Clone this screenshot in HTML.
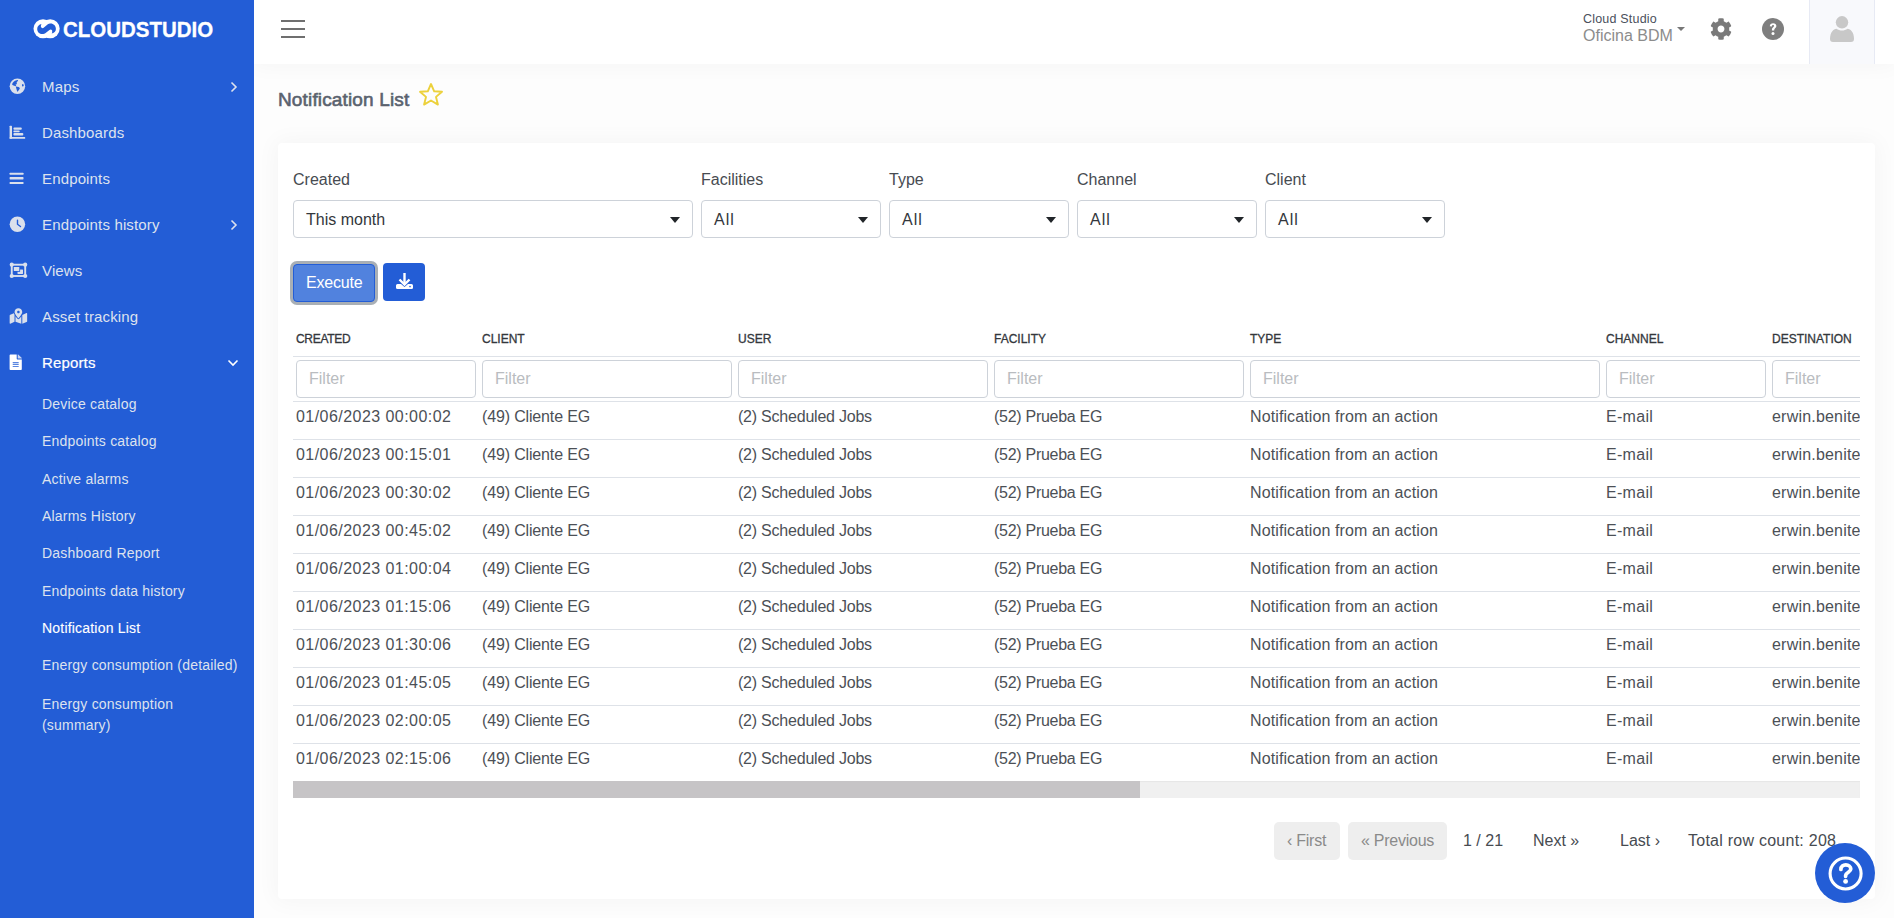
<!DOCTYPE html>
<html><head><meta charset="utf-8">
<style>
*{box-sizing:border-box;margin:0;padding:0}
html,body{width:1894px;height:918px;overflow:hidden}
body{white-space:nowrap;font-family:"Liberation Sans",sans-serif;background:#fdfdfd;position:relative;color:#333}
.a{position:absolute;white-space:nowrap}
#side{position:absolute;left:0;top:0;width:254px;height:918px;background:#235dd6;z-index:3}
#hdr{position:absolute;left:254px;top:0;width:1640px;height:64px;background:#fff;box-shadow:0 0 22px 2px rgba(0,0,0,0.035);z-index:2}
.nav{position:absolute;left:42px;font-size:15px;line-height:20px;color:#dde2ee;letter-spacing:0.15px}
.sub{position:absolute;left:42px;font-size:14px;line-height:18px;color:#dde2ee;letter-spacing:0.2px}
.ico{position:absolute;left:9px}
.chev{position:absolute;left:229.5px}
#card{position:absolute;left:278px;top:143px;width:1597px;height:756px;background:#fff;border-radius:4px;box-shadow:0 0 22px 3px rgba(0,0,0,0.035)}
.lbl{position:absolute;font-size:16px;line-height:20px;color:#474b51}
.sel{position:absolute;top:200px;height:38px;border:1px solid #cdd2d9;border-radius:4px;background:#fff}
.sel span{position:absolute;left:12px;top:9px;font-size:16px;line-height:20px;color:#33373c}
.sel i{position:absolute;right:12px;top:16px;width:0;height:0;border-left:5px solid transparent;border-right:5px solid transparent;border-top:6px solid #212529}
.th{position:absolute;top:331px;font-size:12px;line-height:16px;color:#33373c;-webkit-text-stroke:0.3px #33373c;letter-spacing:0}
.fi{position:absolute;top:360px;height:38px;border:1px solid #cdd2d9;border-radius:4px;background:#fff}
.fi span{position:absolute;left:12px;top:8px;font-size:16px;line-height:20px;color:#b9bcc0}
.hl{position:absolute;left:293px;width:1567px;height:1px;background:#dee2e8}
.rw{position:absolute;left:0;top:0;width:0;height:20px}
.row{position:absolute;top:0;font-size:16px;line-height:20px;color:#4c5056}
.pg{position:absolute;font-size:16px;line-height:20px;color:#474b51}
.pgb{position:absolute;top:822px;height:38px;background:#eeeeee;border-radius:5px}
.pgb span{position:absolute;top:9px;font-size:16px;line-height:20px;color:#8a8a8a;letter-spacing:-0.25px}
</style></head><body>

<div id="side">
  <!-- logo -->
  <svg class="a" style="left:28px;top:14px" width="38" height="30" viewBox="0 0 38 30">
    <circle cx="15" cy="14.8" r="9.5" fill="#fff"/><circle cx="22.2" cy="14.8" r="9.5" fill="#fff"/>
    <path d="M13.6 10.1 C11 10.5 9.2 12.5 9.2 14.9 C9.2 17.8 11.5 20.05 14.3 20.05 C15.8 20.05 16.6 19.8 17.6 19 L21.47 15.88 A1.7 1.7 0 0 1 24.19 17.64 C24.2 18.6 23.9 19.1 23.5 19.5 C26.1 19.1 27.9 17.2 27.9 14.9 C27.9 11.8 25.5 9.55 22.7 9.55 C21.5 9.55 20.6 9.8 19.5 10.6 L15.63 13.72 A1.7 1.7 0 0 1 12.91 11.96 C12.9 11 13.2 10.5 13.6 10.1 Z" fill="#235dd6"/>
  </svg>
  <div class="a" style="left:63px;top:15.5px;font-size:22.5px;line-height:27px;font-weight:bold;color:#fff;transform:scaleX(0.91);transform-origin:0 0;-webkit-text-stroke:0.3px #fff">CLOUDSTUDIO</div>

  <!-- nav icons -->
  <svg class="a" style="left:4px;top:74px" width="24" height="24" viewBox="0 0 24 24"><circle cx="13.4" cy="12.35" r="7.75" fill="#dae0ec"/><path d="M8.1 10.5 C8.2 9.4 8.9 8.4 11 6.8 C12 6.3 13 6.1 13.9 6.1 L14.1 6.8 L13.1 7.8 L12.5 8.9 L13.1 9.9 L11.6 10.6 L12.3 12.3 L11 12 L8.9 11.2 Z M11.8 12.5 L14.6 13.1 L15.9 13.9 L15.4 15.2 L13.6 17.8 L13.1 17.3 L12.3 14.6 Z" fill="#235dd6"/><ellipse cx="18.8" cy="11.3" rx="0.8" ry="1.3" fill="#235dd6"/></svg>
  <div class="nav" style="top:77px">Maps</div>
  <svg class="chev" style="top:81px" width="8" height="12" viewBox="0 0 8 12"><path d="M1.5 1.5 L6 6 L1.5 10.5" fill="none" stroke="#dde2ee" stroke-width="1.6"/></svg>

  <svg class="a" style="left:4px;top:120px" width="24" height="24" viewBox="0 0 24 24"><rect x="5.6" y="5.75" width="2.4" height="13.05" rx="0.6" fill="#dae0ec"/><rect x="5.6" y="17" width="15.6" height="1.8" rx="0.5" fill="#dae0ec"/><rect x="9.4" y="7.5" width="8.4" height="2.2" rx="1" fill="#dae0ec"/><rect x="9.4" y="10.6" width="6.3" height="1.7" rx="0.8" fill="#dae0ec"/><rect x="9.4" y="13" width="9.9" height="2.4" rx="1" fill="#dae0ec"/></svg>
  <div class="nav" style="top:123px">Dashboards</div>

  <svg class="a" style="left:4px;top:166px" width="24" height="24" viewBox="0 0 24 24"><rect x="5.6" y="6.7" width="13.9" height="2.1" rx="0.6" fill="#dae0ec"/><rect x="5.6" y="11.1" width="13.9" height="2.3" rx="0.6" fill="#dae0ec"/><rect x="5.6" y="16.1" width="13.9" height="1.9" rx="0.5" fill="#dae0ec"/></svg>
  <div class="nav" style="top:169px">Endpoints</div>

  <svg class="a" style="left:4px;top:212px" width="24" height="24" viewBox="0 0 24 24"><circle cx="13.4" cy="12.35" r="7.75" fill="#dae0ec"/><path d="M13.5 8.2 V12.3 L16.5 14.5" fill="none" stroke="#235dd6" stroke-width="1.4" stroke-linecap="round" stroke-linejoin="round"/></svg>
  <div class="nav" style="top:215px">Endpoints history</div>
  <svg class="chev" style="top:219px" width="8" height="12" viewBox="0 0 8 12"><path d="M1.5 1.5 L6 6 L1.5 10.5" fill="none" stroke="#dde2ee" stroke-width="1.6"/></svg>

  <svg class="a" style="left:4px;top:258px" width="24" height="24" viewBox="0 0 24 24"><rect x="7.75" y="6.7" width="13.45" height="11.3" fill="none" stroke="#dae0ec" stroke-width="1.9"/><circle cx="7.75" cy="6.7" r="2.1" fill="#dae0ec"/><circle cx="21.2" cy="6.7" r="2.1" fill="#dae0ec"/><circle cx="7.75" cy="18" r="2.1" fill="#dae0ec"/><circle cx="21.2" cy="18" r="2.1" fill="#dae0ec"/><rect x="13.5" y="11.5" width="5.5" height="4.4" rx="0.4" fill="#dae0ec"/><rect x="9.1" y="8.3" width="7" height="5.5" fill="#235dd6"/><rect x="9.8" y="9" width="5.5" height="4.1" rx="0.4" fill="#dae0ec"/></svg>
  <div class="nav" style="top:261px">Views</div>

  <svg class="a" style="left:4px;top:304px" width="24" height="24" viewBox="0 0 24 24"><path transform="translate(5.66 4.2) scale(0.03038)" fill="#dae0ec" d="M288 0c-69.59 0-126 56.41-126 126 0 56.26 82.35 158.8 113.9 196.02 6.39 7.540 17.82 7.540 24.2 0C331.65 284.8 414 182.26 414 126 414 56.41 357.59 0 288 0zm0 168c-23.2 0-42-18.8-42-42s18.8-42 42-42 42 18.8 42 42-18.8 42-42 42zM20.12 215.95A32.006 32.006 0 0 0 0 245.66v250.32c0 11.32 11.43 19.06 21.94 14.86L160 448V214.92c-8.84-15.98-16.07-31.54-21.25-46.42L20.12 215.95zM288 359.67c-14.07 0-27.38-6.18-36.51-16.96-19.66-23.2-40.57-49.62-59.49-76.72v182l192 64V266c-18.92 27.09-39.820 53.52-59.49 76.72-9.13 10.77-22.44 16.95-36.51 16.95zm266.06-198.51L416 224v288l139.88-55.950A31.996 31.996 0 0 0 576 426.34V176.02c0-11.32-11.43-19.06-21.94-14.86z"/></svg>
  <div class="nav" style="top:307px">Asset tracking</div>

  <svg class="a" style="left:4px;top:350px" width="24" height="24" viewBox="0 0 24 24"><g transform="translate(5.6 4.6) scale(0.03177 0.0301)"><path fill="#fff" d="M224 136V0H24C10.7 0 0 10.7 0 24v464c0 13.3 10.7 24 24 24h336c13.3 0 24-10.7 24-24V160H248c-13.2 0-24-10.8-24-24z"/><path fill="#c9d5f2" d="M384 121.9v6.1H256V0h6.1c6.4 0 12.5 2.5 17 7l97.9 98c4.5 4.5 7 10.6 7 16.9z"/><rect x="96" y="256" width="192" height="28" rx="10" fill="#235dd6"/><rect x="96" y="320" width="192" height="28" rx="10" fill="#235dd6"/><rect x="96" y="384" width="192" height="28" rx="10" fill="#235dd6"/></g></svg>
  <div class="nav" style="top:353px;color:#fff;-webkit-text-stroke:0.2px #fff">Reports</div>
  <svg class="a" style="left:227px;top:359px" width="12" height="8" viewBox="0 0 12 8"><path d="M1.5 1.5 L6 6 L10.5 1.5" fill="none" stroke="#fff" stroke-width="1.6"/></svg>

  <div class="sub" style="top:395px">Device catalog</div>
  <div class="sub" style="top:432px">Endpoints catalog</div>
  <div class="sub" style="top:470px">Active alarms</div>
  <div class="sub" style="top:507px">Alarms History</div>
  <div class="sub" style="top:544px">Dashboard Report</div>
  <div class="sub" style="top:582px">Endpoints data history</div>
  <div class="sub" style="top:619px;color:#fff;-webkit-text-stroke:0.12px #fff">Notification List</div>
  <div class="sub" style="top:656px">Energy consumption (detailed)</div>
  <div class="sub" style="top:694px;line-height:21px;white-space:normal">Energy consumption<br>(summary)</div>
</div>

<div id="hdr">
  <div class="a" style="left:27px;top:20px;width:24px;height:2px;background:#6f6f6f"></div>
  <div class="a" style="left:27px;top:28px;width:24px;height:2px;background:#6f6f6f"></div>
  <div class="a" style="left:27px;top:36px;width:24px;height:2px;background:#6f6f6f"></div>

  <div class="a" style="left:1329px;top:11px;font-size:12.5px;line-height:16px;color:#4a505c;letter-spacing:0.2px">Cloud Studio</div>
  <div class="a" style="left:1329px;top:27px;font-size:16px;line-height:18px;color:#8c8c8c">Oficina BDM</div>
  <div class="a" style="left:1423px;top:27px;width:0;height:0;border-left:4px solid transparent;border-right:4px solid transparent;border-top:4px solid #777"></div>

  <svg class="a" style="left:1456px;top:18px" width="22" height="22" viewBox="0 0 512 512"><path fill="#7a7a7a" d="M487.4 315.7l-42.6-24.6c4.3-23.2 4.3-47 0-70.2l42.6-24.6c4.9-2.8 7.1-8.6 5.5-14-11.1-35.6-30-67.8-54.7-94.6-3.8-4.100-10-5.1-14.800-2.300L380.800 110c-17.9-15.4-38.5-27.3-60.8-35.1V25.8c0-5.6-3.9-10.5-9.4-11.700-36.7-8.2-74.300-7.8-109.200 0-5.5 1.2-9.4 6.1-9.4 11.700V75c-22.2 7.9-42.8 19.8-60.8 35.100L88.700 85.500c-4.900-2.800-11-1.900-14.800 2.300-24.700 26.700-43.600 58.900-54.700 94.600-1.700 5.400.600 11.200 5.500 14L67.300 221c-4.300 23.200-4.300 47 0 70.200l-42.600 24.600c-4.900 2.800-7.100 8.600-5.500 14 11.100 35.600 30 67.800 54.700 94.600 3.800 4.100 10 5.100 14.800 2.300l42.600-24.600c17.900 15.400 38.500 27.300 60.800 35.100v49.200c0 5.600 3.900 10.500 9.400 11.700 36.700 8.200 74.300 7.800 109.200 0 5.500-1.200 9.400-6.100 9.400-11.700v-49.200c22.200-7.900 42.800-19.800 60.800-35.100l42.600 24.600c4.900 2.800 11 1.900 14.800-2.300 24.700-26.700 43.600-58.900 54.700-94.600 1.500-5.500-.700-11.300-5.600-14.100zM256 336c-44.100 0-80-35.900-80-80s35.900-80 80-80 80 35.900 80 80-35.900 80-80 80z"/></svg>

  <svg class="a" style="left:1508px;top:18px" width="22" height="22" viewBox="0 0 22 22"><circle cx="11" cy="11" r="11" fill="#7e7e7e"/><path d="M7.8 8.3 C7.8 6.2 9.3 5.2 11.1 5.2 C13 5.2 14.4 6.3 14.4 8 C14.4 9.9 12.2 10.3 12.2 12 V12.5 H9.9 V11.8 C9.9 9.6 12 9.2 12 8.1 C12 7.5 11.6 7.1 11 7.1 C10.4 7.1 10 7.6 10 8.4 Z" fill="#fff"/><circle cx="11" cy="15.4" r="1.5" fill="#fff"/></svg>

  <div class="a" style="left:1555px;top:0;width:66px;height:64px;background:#f8f9fc;border-left:1px solid #e7eaf4;border-right:1px solid #e7eaf4"></div>
  <svg class="a" style="left:1576px;top:16px" width="24" height="27" viewBox="0 0 24 27"><circle cx="12" cy="6.3" r="6.2" fill="#c8c8c8"/><path d="M0 23 C0 16.5 3.5 12.8 6.5 12.8 C8 14 10 14.6 12 14.6 C14 14.6 16 14 17.5 12.8 C20.5 12.8 24 16.5 24 23 C24 25 23 26 21 26 H3 C1 26 0 25 0 23 Z" fill="#c8c8c8"/></svg>
</div>

<div class="a" style="left:278px;top:89px;font-size:19px;line-height:22px;color:#5a626e;-webkit-text-stroke:0.6px #5a626e;letter-spacing:0.15px">Notification List</div>
<svg class="a" style="left:418px;top:82px" width="26" height="26" viewBox="0 0 26 26"><path d="M13 2 L16.2 9.3 L24 9.8 L18 14.9 L19.9 22.6 L13 18.5 L6.1 22.6 L8 14.9 L2 9.8 L9.8 9.3 Z" fill="none" stroke="#ecd13c" stroke-width="1.9" stroke-linejoin="round"/></svg>

<div id="card"></div>

<!-- filters -->
<div class="lbl" style="left:293px;top:170px">Created</div>
<div class="lbl" style="left:701px;top:170px">Facilities</div>
<div class="lbl" style="left:889px;top:170px">Type</div>
<div class="lbl" style="left:1077px;top:170px">Channel</div>
<div class="lbl" style="left:1265px;top:170px">Client</div>

<div class="sel" style="left:293px;width:400px"><span>This month</span><i></i></div>
<div class="sel" style="left:701px;width:180px"><span style="letter-spacing:1px">All</span><i></i></div>
<div class="sel" style="left:889px;width:180px"><span style="letter-spacing:1px">All</span><i></i></div>
<div class="sel" style="left:1077px;width:180px"><span style="letter-spacing:1px">All</span><i></i></div>
<div class="sel" style="left:1265px;width:180px"><span style="letter-spacing:1px">All</span><i></i></div>

<!-- buttons -->
<div class="a" style="left:290px;top:261px;width:88px;height:44px;border-radius:7px;background:#a9afb5"></div>
<div class="a" style="left:293px;top:264px;width:82px;height:38px;border-radius:4px;background:#5182de;border:1px solid #235dd6"></div>
<div class="a" style="left:306px;top:273px;font-size:16px;line-height:20px;color:#fff;letter-spacing:-0.2px">Execute</div>
<div class="a" style="left:383px;top:263px;width:42px;height:38px;border-radius:4px;background:#235dd6"></div>
<svg class="a" style="left:396px;top:272px" width="17" height="18" viewBox="0 0 17 18"><path d="M8.5 1 V12" stroke="#fff" stroke-width="2.4"/><path d="M3.5 7.5 L8.5 12.5 L13.5 7.5" fill="none" stroke="#fff" stroke-width="2.4"/><path d="M0 13.5 Q0 12 1.5 12 H5 L8.5 15 L12 12 H15.5 Q17 12 17 13.5 V15.8 Q17 17 15.5 17 H1.5 Q0 17 0 15.8 Z" fill="#fff"/><circle cx="14" cy="14.6" r="0.8" fill="#235dd6"/></svg>

<!-- table -->
<div id="tbl">
<div class="th" style="left:296px;letter-spacing:-0.3px">CREATED</div>
<div class="th" style="left:482px">CLIENT</div>
<div class="th" style="left:738px">USER</div>
<div class="th" style="left:994px">FACILITY</div>
<div class="th" style="left:1250px">TYPE</div>
<div class="th" style="left:1606px">CHANNEL</div>
<div class="th" style="left:1772px">DESTINATION</div>
<div class="hl" style="top:356px"></div>
<div class="fi" style="left:296px;width:180px"><span>Filter</span></div>
<div class="fi" style="left:482px;width:250px"><span>Filter</span></div>
<div class="fi" style="left:738px;width:250px"><span>Filter</span></div>
<div class="fi" style="left:994px;width:250px"><span>Filter</span></div>
<div class="fi" style="left:1250px;width:350px"><span>Filter</span></div>
<div class="fi" style="left:1606px;width:160px"><span>Filter</span></div>
<div style="position:absolute;left:1772px;top:360px;width:88px;height:38px;overflow:hidden"><div class="fi" style="left:0;top:0;width:160px"><span>Filter</span></div></div>
<div class="hl" style="top:401px"></div>
<div class="rw" style="top:407px"><div class="row" style="left:296px;letter-spacing:0.45px">01/06/2023 00:00:02</div><div class="row" style="left:482px;letter-spacing:-0.15px">(49) Cliente EG</div><div class="row" style="left:738px;letter-spacing:-0.22px">(2) Scheduled Jobs</div><div class="row" style="left:994px;letter-spacing:-0.28px">(52) Prueba EG</div><div class="row" style="left:1250px;letter-spacing:0.11px">Notification from an action</div><div class="row" style="left:1606px;letter-spacing:0.3px">E-mail</div><div class="row" style="left:1772px;width:88px;overflow:hidden;letter-spacing:0.2px">erwin.benitez@cloud.studio</div></div>
<div class="hl" style="top:439px"></div>
<div class="rw" style="top:445px"><div class="row" style="left:296px;letter-spacing:0.45px">01/06/2023 00:15:01</div><div class="row" style="left:482px;letter-spacing:-0.15px">(49) Cliente EG</div><div class="row" style="left:738px;letter-spacing:-0.22px">(2) Scheduled Jobs</div><div class="row" style="left:994px;letter-spacing:-0.28px">(52) Prueba EG</div><div class="row" style="left:1250px;letter-spacing:0.11px">Notification from an action</div><div class="row" style="left:1606px;letter-spacing:0.3px">E-mail</div><div class="row" style="left:1772px;width:88px;overflow:hidden;letter-spacing:0.2px">erwin.benitez@cloud.studio</div></div>
<div class="hl" style="top:477px"></div>
<div class="rw" style="top:483px"><div class="row" style="left:296px;letter-spacing:0.45px">01/06/2023 00:30:02</div><div class="row" style="left:482px;letter-spacing:-0.15px">(49) Cliente EG</div><div class="row" style="left:738px;letter-spacing:-0.22px">(2) Scheduled Jobs</div><div class="row" style="left:994px;letter-spacing:-0.28px">(52) Prueba EG</div><div class="row" style="left:1250px;letter-spacing:0.11px">Notification from an action</div><div class="row" style="left:1606px;letter-spacing:0.3px">E-mail</div><div class="row" style="left:1772px;width:88px;overflow:hidden;letter-spacing:0.2px">erwin.benitez@cloud.studio</div></div>
<div class="hl" style="top:515px"></div>
<div class="rw" style="top:521px"><div class="row" style="left:296px;letter-spacing:0.45px">01/06/2023 00:45:02</div><div class="row" style="left:482px;letter-spacing:-0.15px">(49) Cliente EG</div><div class="row" style="left:738px;letter-spacing:-0.22px">(2) Scheduled Jobs</div><div class="row" style="left:994px;letter-spacing:-0.28px">(52) Prueba EG</div><div class="row" style="left:1250px;letter-spacing:0.11px">Notification from an action</div><div class="row" style="left:1606px;letter-spacing:0.3px">E-mail</div><div class="row" style="left:1772px;width:88px;overflow:hidden;letter-spacing:0.2px">erwin.benitez@cloud.studio</div></div>
<div class="hl" style="top:553px"></div>
<div class="rw" style="top:559px"><div class="row" style="left:296px;letter-spacing:0.45px">01/06/2023 01:00:04</div><div class="row" style="left:482px;letter-spacing:-0.15px">(49) Cliente EG</div><div class="row" style="left:738px;letter-spacing:-0.22px">(2) Scheduled Jobs</div><div class="row" style="left:994px;letter-spacing:-0.28px">(52) Prueba EG</div><div class="row" style="left:1250px;letter-spacing:0.11px">Notification from an action</div><div class="row" style="left:1606px;letter-spacing:0.3px">E-mail</div><div class="row" style="left:1772px;width:88px;overflow:hidden;letter-spacing:0.2px">erwin.benitez@cloud.studio</div></div>
<div class="hl" style="top:591px"></div>
<div class="rw" style="top:597px"><div class="row" style="left:296px;letter-spacing:0.45px">01/06/2023 01:15:06</div><div class="row" style="left:482px;letter-spacing:-0.15px">(49) Cliente EG</div><div class="row" style="left:738px;letter-spacing:-0.22px">(2) Scheduled Jobs</div><div class="row" style="left:994px;letter-spacing:-0.28px">(52) Prueba EG</div><div class="row" style="left:1250px;letter-spacing:0.11px">Notification from an action</div><div class="row" style="left:1606px;letter-spacing:0.3px">E-mail</div><div class="row" style="left:1772px;width:88px;overflow:hidden;letter-spacing:0.2px">erwin.benitez@cloud.studio</div></div>
<div class="hl" style="top:629px"></div>
<div class="rw" style="top:635px"><div class="row" style="left:296px;letter-spacing:0.45px">01/06/2023 01:30:06</div><div class="row" style="left:482px;letter-spacing:-0.15px">(49) Cliente EG</div><div class="row" style="left:738px;letter-spacing:-0.22px">(2) Scheduled Jobs</div><div class="row" style="left:994px;letter-spacing:-0.28px">(52) Prueba EG</div><div class="row" style="left:1250px;letter-spacing:0.11px">Notification from an action</div><div class="row" style="left:1606px;letter-spacing:0.3px">E-mail</div><div class="row" style="left:1772px;width:88px;overflow:hidden;letter-spacing:0.2px">erwin.benitez@cloud.studio</div></div>
<div class="hl" style="top:667px"></div>
<div class="rw" style="top:673px"><div class="row" style="left:296px;letter-spacing:0.45px">01/06/2023 01:45:05</div><div class="row" style="left:482px;letter-spacing:-0.15px">(49) Cliente EG</div><div class="row" style="left:738px;letter-spacing:-0.22px">(2) Scheduled Jobs</div><div class="row" style="left:994px;letter-spacing:-0.28px">(52) Prueba EG</div><div class="row" style="left:1250px;letter-spacing:0.11px">Notification from an action</div><div class="row" style="left:1606px;letter-spacing:0.3px">E-mail</div><div class="row" style="left:1772px;width:88px;overflow:hidden;letter-spacing:0.2px">erwin.benitez@cloud.studio</div></div>
<div class="hl" style="top:705px"></div>
<div class="rw" style="top:711px"><div class="row" style="left:296px;letter-spacing:0.45px">01/06/2023 02:00:05</div><div class="row" style="left:482px;letter-spacing:-0.15px">(49) Cliente EG</div><div class="row" style="left:738px;letter-spacing:-0.22px">(2) Scheduled Jobs</div><div class="row" style="left:994px;letter-spacing:-0.28px">(52) Prueba EG</div><div class="row" style="left:1250px;letter-spacing:0.11px">Notification from an action</div><div class="row" style="left:1606px;letter-spacing:0.3px">E-mail</div><div class="row" style="left:1772px;width:88px;overflow:hidden;letter-spacing:0.2px">erwin.benitez@cloud.studio</div></div>
<div class="hl" style="top:743px"></div>
<div class="rw" style="top:749px"><div class="row" style="left:296px;letter-spacing:0.45px">01/06/2023 02:15:06</div><div class="row" style="left:482px;letter-spacing:-0.15px">(49) Cliente EG</div><div class="row" style="left:738px;letter-spacing:-0.22px">(2) Scheduled Jobs</div><div class="row" style="left:994px;letter-spacing:-0.28px">(52) Prueba EG</div><div class="row" style="left:1250px;letter-spacing:0.11px">Notification from an action</div><div class="row" style="left:1606px;letter-spacing:0.3px">E-mail</div><div class="row" style="left:1772px;width:88px;overflow:hidden;letter-spacing:0.2px">erwin.benitez@cloud.studio</div></div>
</div>

<!-- scrollbar -->
<div class="a" style="left:293px;top:781px;width:1567px;height:17px;background:#f0f0f0;box-shadow:inset 0 1px 1px rgba(0,0,0,0.04)"></div>
<div class="a" style="left:293px;top:781px;width:847px;height:17px;background:#c6c4c6"></div>

<!-- pagination -->
<div class="pgb" style="left:1274px;width:66px"><span style="left:13px">‹ First</span></div>
<div class="pgb" style="left:1348px;width:99px"><span style="left:13px">« Previous</span></div>
<div class="pg" style="left:1463px;top:831px">1 / 21</div>
<div class="pg" style="left:1533px;top:831px">Next »</div>
<div class="pg" style="left:1620px;top:831px">Last ›</div>
<div class="pg" style="left:1688px;top:831px;letter-spacing:0.25px">Total row count: 208</div>

<!-- help fab -->
<svg class="a" style="left:1815px;top:843px" width="60" height="60" viewBox="0 0 60 60"><circle cx="30" cy="30" r="30" fill="#235dd6"/><circle cx="30.6" cy="30.5" r="15.5" fill="none" stroke="#fff" stroke-width="3.1"/><path d="M25.9 26.4 C25.9 23.3 28.2 21.9 30.8 21.9 C33.6 21.9 35.8 23.7 35.8 26.1 C35.8 29 31.2 29.3 30.7 32.2 L30.6 33.4" fill="none" stroke="#fff" stroke-width="3.7" stroke-linecap="round"/><circle cx="30.6" cy="38.4" r="2.4" fill="#fff"/></svg>

</body></html>
